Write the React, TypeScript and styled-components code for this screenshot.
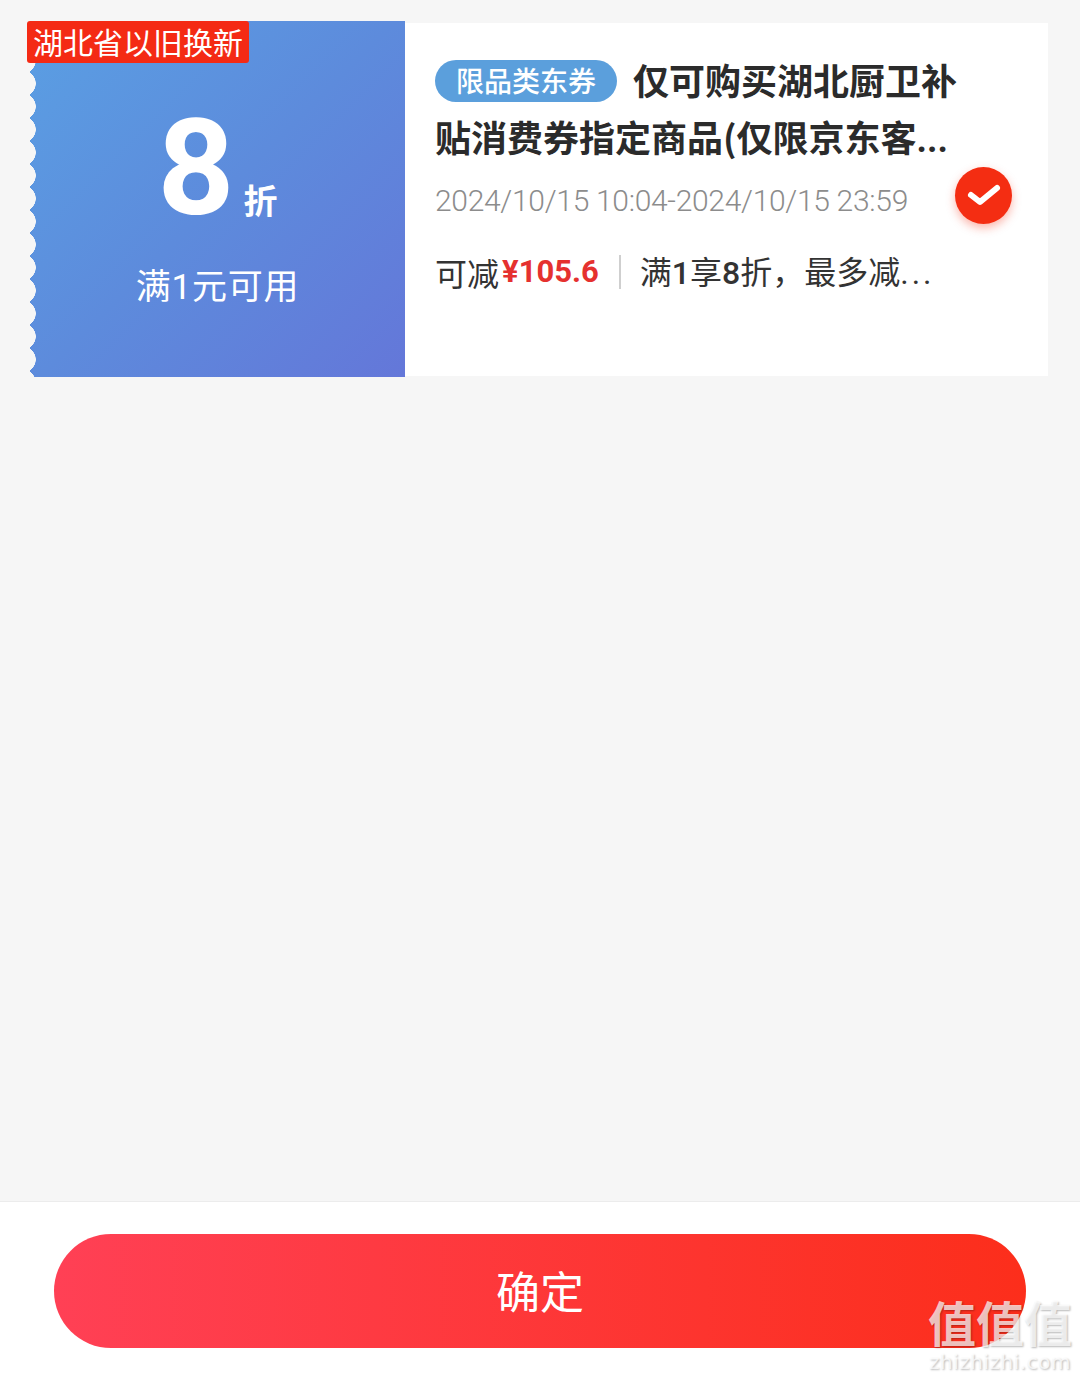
import React from 'react';
import styled, { createGlobalStyle } from 'styled-components';

const CJK = '"Noto Sans CJK SC", sans-serif';
const LATIN = 'Roboto, "Noto Sans CJK SC", sans-serif';

const GlobalStyle = createGlobalStyle`
  html, body {
    margin: 0;
    padding: 0;
    background: #f6f6f6;
  }
  * {
    box-sizing: border-box;
  }
`;

// page
const Page = styled.main`
  width: 1080px;
  height: 1380px;
  display: flex;
  flex-direction: column;
  font-family: ${CJK};
  position: relative;
  overflow: hidden;
`;

const List = styled.section`
  flex: 1;
  padding: 21px 32px 0 30px;
`;

// coupon
const Coupon = styled.article`
  position: relative;
  height: 356px;
  display: grid;
  grid-template-columns: 375px 1fr;
`;

const Region = styled.div`
  position: absolute;
  left: -3px;
  top: 0;
  height: 42px;
  width: 222px;
  z-index: 2;
  background: #f42a14;
  border-radius: 3px;
  color: #fff;
  font-size: 30px;
  line-height: 40px;
  text-align: center;
  white-space: nowrap;
`;

const Stub = styled.div`
  position: relative;
  display: flex;
  flex-direction: column;
  align-items: center;
  padding: 82px 0 0 0;
  background: linear-gradient(135deg, #5a9fe3 0%, #5d8bdc 50%, #6477d9 100%);
  color: #fff;

  &::before {
    content: '';
    position: absolute;
    left: 0;
    top: 0;
    bottom: 0;
    width: 7px;
    background-image: radial-gradient(circle at -7px 50%, #f6f6f6 12.5px, transparent 13px);
    background-size: 7px 23px;
    background-position: 0 5px;
    background-repeat: repeat-y;
  }
`;

const Amount = styled.div`
  display: flex;
  align-items: baseline;
  gap: 9px;
  height: 132px;
`;

const Digit = styled.span`
  font-family: ${LATIN};
  font-size: 134px;
  font-weight: 700;
  line-height: 132px;
`;

const Unit = styled.span`
  font-size: 34px;
  font-weight: 700;
  line-height: 40px;
`;

const Threshold = styled.div`
  margin-top: 29px;
  font-family: ${LATIN};
  font-size: 35px;
  line-height: 48px;
  letter-spacing: 0.8px;
`;

const Body = styled.div`
  margin-top: 2px;
  margin-bottom: 1px;
  background: #fff;
  display: grid;
  grid-template-columns: 520px 57px;
  padding: 0 36px 0 30px;
`;

const Details = styled.div`
  padding-top: 28px;
`;

const Title = styled.h2`
  margin: 0 -20px 0 0;
  font-size: 36px;
  font-weight: 700;
  line-height: 57px;
  color: #2b2b2b;
`;

const Tag = styled.span`
  display: inline-block;
  vertical-align: 3px;
  width: 182px;
  height: 42px;
  margin-right: 16px;
  border-radius: 21px;
  background: #5b9fdc;
  color: #fff;
  font-size: 28px;
  font-weight: 500;
  line-height: 40px;
  text-align: center;
`;

const TitleDots = styled.span`
  font-family: ${LATIN};
`;

const Dates = styled.div`
  margin-top: 10px;
  font-family: ${LATIN};
  font-size: 30px;
  font-weight: 300;
  line-height: 44px;
  letter-spacing: -0.3px;
  color: #8c8c8c;
  white-space: nowrap;
`;

const Summary = styled.div`
  margin-top: 25px;
  display: flex;
  align-items: center;
  font-size: 32px;
  line-height: 44px;
  color: #333;
  white-space: nowrap;
`;

const Saving = styled.span`
  margin-left: 3px;
  font-family: ${LATIN};
  font-size: 31px;
  font-weight: 700;
  color: #e5312f;
`;

const Divider = styled.span`
  width: 2px;
  height: 34px;
  margin: 0 19px 0 20px;
  background: #cfcfcf;
`;

const Strong = styled.b`
  font-family: ${LATIN};
  font-weight: 500;
`;

const Dots = styled.span`
  font-family: ${LATIN};
  letter-spacing: 3px;
`;

const Check = styled.div`
  align-self: center;
  width: 57px;
  height: 57px;
  margin-bottom: 9px;
  border-radius: 50%;
  background: #f42d12;
  box-shadow: 0 4px 10px rgba(244, 45, 18, 0.35);
  display: flex;
  align-items: center;
  justify-content: center;
`;

// footer
const Footer = styled.footer`
  height: 179px;
  padding: 32px 54px 0;
  background: #fff;
  border-top: 1px solid #ececec;
`;

const Confirm = styled.button`
  display: block;
  width: 100%;
  height: 114px;
  padding: 0 0 3px;
  border: 0;
  border-radius: 57px;
  background: linear-gradient(90deg, #ff4055 0%, #fc2e1b 100%);
  color: #fff;
  font-family: ${CJK};
  font-size: 44px;
`;

const Watermark = styled.div`
  position: absolute;
  right: 8px;
  bottom: 7px;
  width: 144px;
  text-align: center;
  color: rgba(255, 255, 255, 0.72);
  text-shadow: 1px 1px 2px rgba(0, 0, 0, 0.28);
`;

const MarkGlyphs = styled.div`
  margin-bottom: 5px;
  font-size: 48px;
  font-weight: 700;
  line-height: 50px;
  white-space: nowrap;
`;

const MarkUrl = styled.div`
  font-family: "DejaVu Sans", sans-serif;
  font-size: 20px;
  line-height: 22px;
  letter-spacing: 0.5px;
  white-space: nowrap;
`;

const App = () => {
  return (
    <Page>
      <GlobalStyle />
      <List>
        <Coupon>
          <Region>湖北省以旧换新</Region>
          <Stub>
            <Amount>
              <Digit>8</Digit>
              <Unit>折</Unit>
            </Amount>
            <Threshold>满1元可用</Threshold>
          </Stub>
          <Body>
            <Details>
              <Title>
                <Tag>限品类东券</Tag>
                仅可购买湖北厨卫补贴消费券指定商品(仅限京东客<TitleDots>...</TitleDots>
              </Title>
              <Dates>2024/10/15 10:04-2024/10/15 23:59</Dates>
              <Summary>
                可减<Saving>¥105.6</Saving>
                <Divider />
                <span>
                  满<Strong>1</Strong>享<Strong>8</Strong>折，最多减<Dots>...</Dots>
                </span>
              </Summary>
            </Details>
            <Check>
              <svg width="34" height="26" viewBox="0 0 34 26" fill="none">
                <path d="M4 13l9 7L30 6" stroke="#fff" strokeWidth="6" strokeLinecap="round" strokeLinejoin="round" />
              </svg>
            </Check>
          </Body>
        </Coupon>
      </List>
      <Footer>
        <Confirm>确定</Confirm>
      </Footer>
      <Watermark>
        <MarkGlyphs>值值值</MarkGlyphs>
        <MarkUrl>zhizhizhi.com</MarkUrl>
      </Watermark>
    </Page>
  );
};

export default App;
